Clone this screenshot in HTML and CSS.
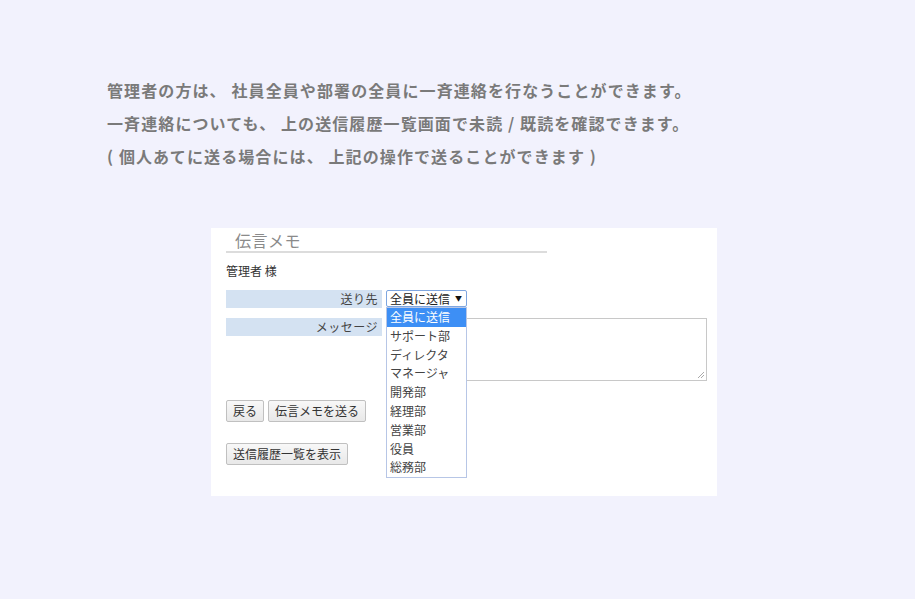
FILE: index.html
```html
<!DOCTYPE html>
<html lang="ja">
<head>
<meta charset="utf-8">
<link rel="stylesheet" href="styles.css">
</head>
<body>
<div class="intro">
  <p>管理者の方は、 社員全員や部署の全員に一斉連絡を行なうことができます。</p>
  <p>一斉連絡についても、 上の送信履歴一覧画面で未読 / 既読を確認できます。</p>
  <p>( 個人あてに送る場合には、 上記の操作で送ることができます )</p>
</div>
<div class="panel">
  <div class="title">伝言メモ</div>
  <div class="to">管理者 様</div>
  <div class="form">
    <div class="label">送り先</div>
    <div class="field sel-wrap">
      <div class="select">全員に送信<span class="arrow">▼</span></div>
      <ul class="dropdown">
        <li class="on">全員に送信</li>
        <li>サポート部</li>
        <li>ディレクタ</li>
        <li>マネージャ</li>
        <li>開発部</li>
        <li>経理部</li>
        <li>営業部</li>
        <li>役員</li>
        <li>総務部</li>
      </ul>
    </div>
    <div class="label">メッセージ</div>
    <div class="field">
      <div class="textarea"><svg class="grip" width="8" height="8" viewBox="0 0 8 8"><path d="M7 1L1 7M7 4L4 7" stroke="#aaa" stroke-width="1"/></svg></div>
    </div>
  </div>
  <div class="buttons">
    <span class="btn">戻る</span>
    <span class="btn">伝言メモを送る</span>
  </div>
  <div class="buttons second">
    <span class="btn">送信履歴一覧を表示</span>
  </div>
</div>
</body>
</html>
```
FILE: styles.css
```css
html, body {
  margin: 0;
  padding: 0;
}
body {
  background: #f2f2fd;
  width: 915px;
  height: 599px;
  overflow: hidden;
  font-family: "Noto Sans CJK JP", "Noto Sans", sans-serif;
}
.intro {
  padding: 74px 0 0 107px;
  color: #7a7a7a;
  font-size: 16px;
  line-height: 33px;
  font-weight: 700;
  letter-spacing: 1.1px;
}
.intro p {
  margin: 0;
}
.panel {
  margin: 55px 0 0 211px;
  width: 476px;
  height: 266px;
  padding: 2px 15px 0 15px;
  background: #fff;
}
.title {
  width: 312px;
  padding: 0 0 1px 9px;
  font-size: 16px;
  line-height: 20px;
  color: #8a8a8a;
  border-bottom: 2px solid #dcdcdc;
  letter-spacing: 0.5px;
}
.to {
  margin-top: 10px;
  font-size: 12px;
  line-height: 16px;
  color: #333;
}
.form {
  margin-top: 11px;
  display: grid;
  grid-template-columns: 156px 321px;
  column-gap: 4px;
  row-gap: 10px;
  align-items: start;
}
.label {
  height: 18px;
  line-height: 18px;
  background: #d4e2f2;
  text-align: right;
  padding-right: 4px;
  font-size: 12px;
  color: #444;
  box-sizing: border-box;
  letter-spacing: 0.5px;
}
.sel-wrap {
  position: relative;
}
.select {
  width: 81px;
  height: 17px;
  box-sizing: border-box;
  border: 1px solid #7ea6e0;
  border-radius: 2px;
  font-size: 12px;
  line-height: 15px;
  padding-left: 3px;
  color: #222;
  position: relative;
}
.arrow {
  position: absolute;
  right: 4px;
  top: 0;
  font-size: 7px;
  color: #111;
}
.dropdown {
  position: absolute;
  left: 0;
  top: 17px;
  width: 81px;
  box-sizing: border-box;
  margin: 0;
  padding: 0;
  list-style: none;
  background: #fff;
  border: 1px solid #b7c6e6;
  z-index: 2;
}
.dropdown li {
  height: 18.8px;
  line-height: 18.8px;
  font-size: 12px;
  padding-left: 3px;
  color: #444;
}
.dropdown li.on {
  background: #3d8ff5;
  color: #fff;
}
.textarea {
  width: 321px;
  height: 63px;
  box-sizing: border-box;
  border: 1px solid #c8c8c8;
  position: relative;
  background: #fff;
}
.grip {
  position: absolute;
  right: 1px;
  bottom: 1px;
}
.buttons {
  margin-top: 19px;
  display: flex;
  gap: 4px;
}
.buttons.second {
  margin-top: 21px;
}
.btn {
  display: inline-block;
  height: 22px;
  box-sizing: border-box;
  padding: 0 6px;
  line-height: 20px;
  font-size: 12px;
  color: #333;
  border: 1px solid #c0c0c0;
  border-radius: 2px;
  background: linear-gradient(#f8f8f8, #e8e8e8);
}
```
